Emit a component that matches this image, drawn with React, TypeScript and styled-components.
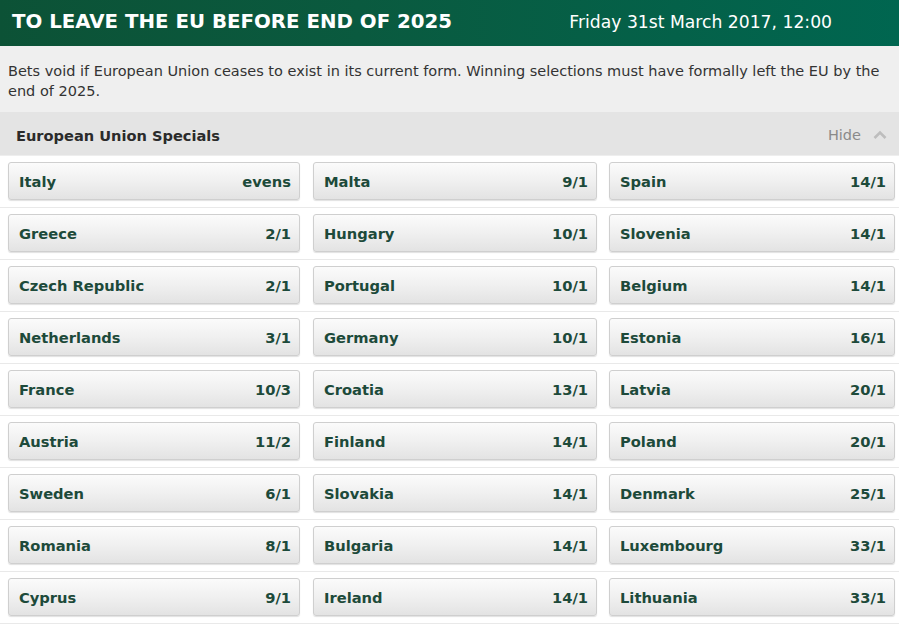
import React, { FC } from "react";
import styled, { createGlobalStyle } from "styled-components";

const GlobalStyle = createGlobalStyle`
  html, body {
    margin: 0;
    padding: 0;
    background: #ffffff;
  }
  * {
    box-sizing: border-box;
  }
  body {
    font-family: "DejaVu Sans", Verdana, sans-serif;
  }
`;

const Page = styled.div`
  width: 899px;
  background: #ffffff;
`;

const Header = styled.div`
  height: 46px;
  display: flex;
  align-items: center;
  justify-content: space-between;
  padding: 0 67px 4px 12px;
  background: linear-gradient(to right, #0c5236 0%, #0a5a3f 40%, #006650 100%);
  color: #ffffff;
`;

const Title = styled.h1`
  margin: 0;
  font-size: 19.8px;
  font-weight: bold;
`;

const DateText = styled.div`
  font-size: 17.2px;
  padding-top: 2px;
`;

const Description = styled.p`
  margin: 0;
  padding: 15px 8px 11px;
  background: #efefef;
  color: #333333;
  font-size: 14.5px;
  line-height: 20px;
`;

const SectionBar = styled.div`
  height: 44px;
  display: flex;
  align-items: center;
  justify-content: space-between;
  padding: 3px 12px 0 16px;
  background: #e4e4e4;
  border-bottom: 1px solid #eeeeee;
`;

const SectionTitle = styled.h2`
  margin: 0;
  font-size: 14.6px;
  font-weight: bold;
  color: #2b2b2b;
`;

const Toggle = styled.div`
  display: flex;
  align-items: center;
  gap: 12px;
  color: #8a8a8a;
  font-size: 14.5px;
`;

const Row = styled.div`
  display: grid;
  grid-template-columns: 292px 284px 285px;
  column-gap: 13px;
  padding: 6px 5px 7px 8px;
  border-bottom: 1px solid #e9e9e9;

  & > :nth-child(3) {
    margin-left: -1px;
  }
`;

const Selection = styled.button`
  height: 38px;
  display: flex;
  align-items: center;
  justify-content: space-between;
  padding: 1px 8px 0 10px;
  border: 1px solid #cfcfcf;
  border-radius: 3px;
  background: linear-gradient(to bottom, #fbfbfb 0%, #f0f0f0 50%, #e3e3e3 100%);
  box-shadow: 0 1px 1px rgba(0, 0, 0, 0.12);
  font-family: "DejaVu Sans", Verdana, sans-serif;
  font-size: 14.7px;
  font-weight: bold;
  color: #1d4a3a;
  cursor: pointer;
`;

type Runner = [string, string];

const rows: Runner[][] = [
  [["Italy", "evens"], ["Malta", "9/1"], ["Spain", "14/1"]],
  [["Greece", "2/1"], ["Hungary", "10/1"], ["Slovenia", "14/1"]],
  [["Czech Republic", "2/1"], ["Portugal", "10/1"], ["Belgium", "14/1"]],
  [["Netherlands", "3/1"], ["Germany", "10/1"], ["Estonia", "16/1"]],
  [["France", "10/3"], ["Croatia", "13/1"], ["Latvia", "20/1"]],
  [["Austria", "11/2"], ["Finland", "14/1"], ["Poland", "20/1"]],
  [["Sweden", "6/1"], ["Slovakia", "14/1"], ["Denmark", "25/1"]],
  [["Romania", "8/1"], ["Bulgaria", "14/1"], ["Luxembourg", "33/1"]],
  [["Cyprus", "9/1"], ["Ireland", "14/1"], ["Lithuania", "33/1"]],
];

const ChevronUp: FC = () => (
  <svg width="14" height="10" viewBox="0 0 14 10" aria-hidden="true">
    <path d="M1.5 8 L7 2.5 L12.5 8" fill="none" stroke="#bdbdbd" strokeWidth="2.6" />
  </svg>
);

const App: FC = () => {
  return (
    <Page>
      <GlobalStyle />
      <Header>
        <Title>TO LEAVE THE EU BEFORE END OF 2025</Title>
        <DateText>Friday 31st March 2017, 12:00</DateText>
      </Header>
      <Description>
        Bets void if European Union ceases to exist in its current form. Winning selections must
        have formally left the EU by the end of 2025.
      </Description>
      <SectionBar>
        <SectionTitle>European Union Specials</SectionTitle>
        <Toggle>
          Hide
          <ChevronUp />
        </Toggle>
      </SectionBar>
      {rows.map((row, i) => (
        <Row key={i}>
          {row.map(([name, odds]) => (
            <Selection key={name}>
              <span>{name}</span>
              <span>{odds}</span>
            </Selection>
          ))}
        </Row>
      ))}
    </Page>
  );
};

export default App;
